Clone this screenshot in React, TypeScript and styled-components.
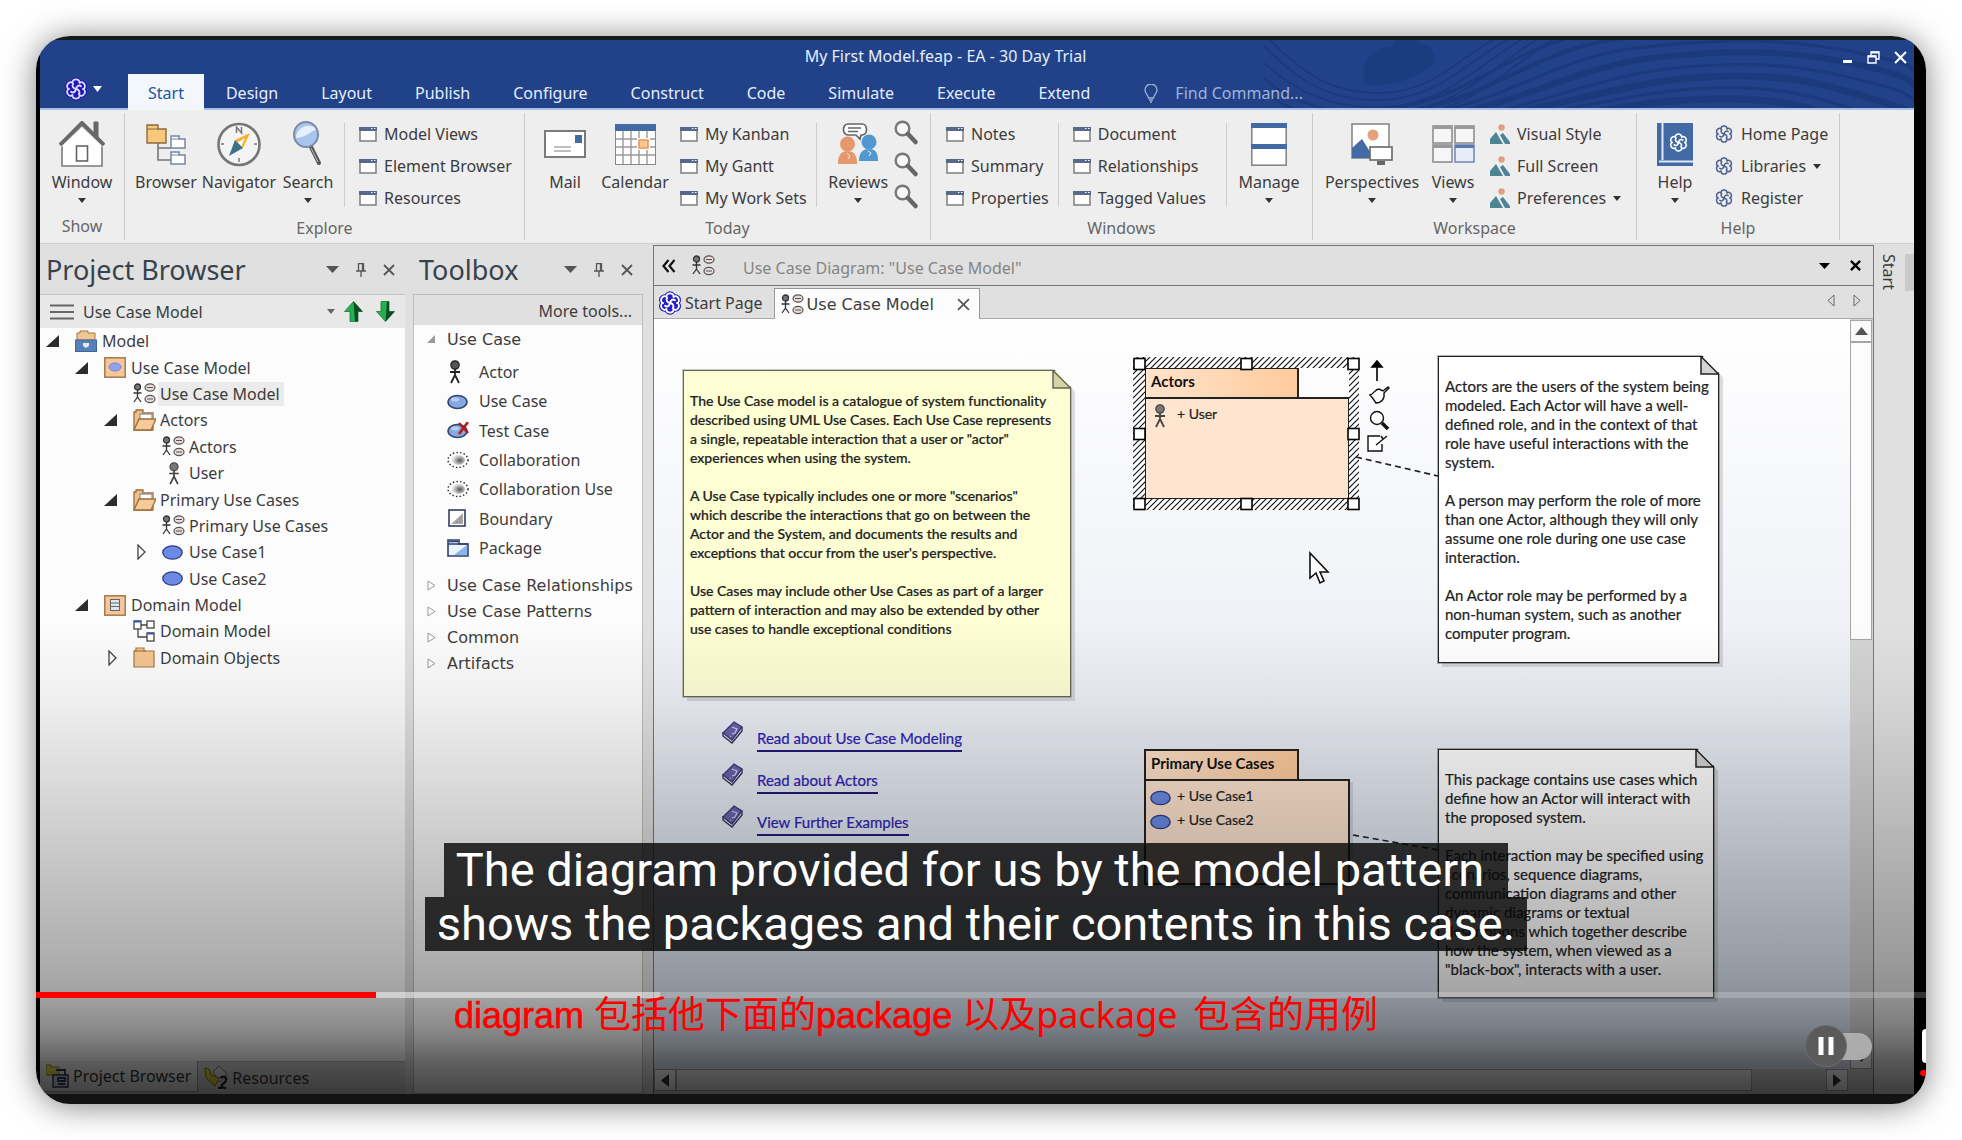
import React from "react";
import styled, { createGlobalStyle, css } from "styled-components";

const UI = '"Noto Sans", "Open Sans", sans-serif';
const WIDE = '"DejaVu Sans", "Noto Sans", sans-serif';
const NOTE = 'Lato, "Open Sans", sans-serif';
const CAPTION = 'Roboto, "Liberation Sans", sans-serif';
const CJK = '"Liberation Sans", "Noto Sans CJK SC", sans-serif';

const GlobalStyle = createGlobalStyle`
  *, *::before, *::after { box-sizing: border-box; }
  body { margin: 0; background: #fff; font-family: ${UI}; font-size: 16px; color: #3c3c3c; }
  button { border: 0; padding: 0; background: none; font: inherit; color: inherit; cursor: pointer; }
  ul { list-style: none; margin: 0; padding: 0; }
  svg { display: block; flex: none; }
  h2 { margin: 0; font-weight: 400; }
`;

/* ---------- frame ---------- */

const Page = styled.div`
  height: 100vh;
  min-height: 900px;
  padding: 36px;
  background: #fff;
`;

const Player = styled.main`
  position: relative;
  display: flex;
  height: 100%;
  padding: 4px 12px 10px 4px;
  border-radius: 34px;
  overflow: hidden;
  background: linear-gradient(#161b17 0 4px, #000 4px calc(100% - 10px), #131313 calc(100% - 10px));
`;

const PlayerShadow = styled.div`
  height: 100%;
  border-radius: 34px;
  box-shadow: 0 2px 32px rgba(0, 0, 0, 0.5);
`;

const AppWindow = styled.div`
  position: relative;
  display: flex;
  flex-direction: column;
  flex: 1;
  min-width: 0;
  background: #e0e0e0;
`;

const Shade = styled.div`
  position: absolute;
  left: 0;
  right: 0;
  bottom: 0;
  height: 474px;
  pointer-events: none;
  background: linear-gradient(
    rgba(0, 0, 0, 0) 0,
    rgba(0, 0, 0, 0.05) 80px,
    rgba(0, 0, 0, 0.1) 130px,
    rgba(0, 0, 0, 0.2) 230px,
    rgba(0, 0, 0, 0.31) 340px,
    rgba(0, 0, 0, 0.37) 380px,
    rgba(0, 0, 0, 0.44) 405px,
    rgba(0, 0, 0, 0.53) 425px,
    rgba(0, 0, 0, 0.61) 440px,
    rgba(0, 0, 0, 0.73) 474px
  );
`;

/* ---------- title bar ---------- */

const TitleBar = styled.header`
  position: relative;
  flex: none;
  background: #214289;
  border-bottom: 2px solid #a9c1ea;
  color: #e4edfb;
`;

const Waves = styled.svg`
  position: absolute;
  right: 0;
  top: 0;
  overflow: hidden;
`;

const TitleRow = styled.div`
  position: relative;
  display: flex;
  height: 34px;
  padding-left: 8px;
`;

const Title = styled.div`
  flex: 1;
  text-align: center;
  line-height: 32px;
`;

const WindowButtons = styled.div`
  display: flex;
  align-items: center;
  gap: 14px;
  padding-right: 7px;
`;

const MenuRow = styled.nav`
  position: relative;
  display: flex;
  gap: 1px;
  height: 34px;
`;

const AppButton = styled.button`
  display: flex;
  align-items: center;
  gap: 5px;
  width: 87px;
  padding: 0 0 4px 24px;
`;

const MenuTab = styled.button<{ $active?: boolean }>`
  padding: 0 21px;
  line-height: 38px;
  height: 36px;
  ${(p) =>
    p.$active &&
    css`
      padding: 0 20px;
      background: #f3f6fa;
      color: #1c55a5;
    `}
`;

const FindBox = styled.label`
  display: flex;
  align-items: center;
  gap: 17px;
  margin-left: 32px;
  padding-top: 4px;
  color: #9fb3d8;
`;

const FindInput = styled.input`
  width: 160px;
  height: 30px;
  padding: 0;
  border: 0;
  outline: 0;
  background: none;
  font: inherit;
  color: inherit;
  &::placeholder { color: #9fb3d8; opacity: 1; }
`;

/* ---------- ribbon ---------- */

const Ribbon = styled.div`
  display: flex;
  flex: none;
  height: 134px;
  background: #eee;
  border-bottom: 1px solid #cfcfcf;
`;

const Group = styled.section<{ $min: number }>`
  display: flex;
  flex-direction: column;
  min-width: ${(p) => p.$min}px;
  margin: 3px 0;
  border-right: 1px solid #cacaca;
`;

const GroupBody = styled.div`
  display: flex;
  height: 101px;
  padding: 5px 7px 0;
`;

const GroupLabel = styled.div`
  text-align: center;
  line-height: 28px;
  color: #666;
`;

const Divider = styled.div<{ $push?: boolean }>`
  width: 1px;
  height: 84px;
  margin: 5px 6px 0 ${(p) => (p.$push ? "auto" : "6px")};
  background: #cdcdcd;
`;

const Big = styled.button<{ $w: number }>`
  display: flex;
  flex-direction: column;
  align-items: center;
  width: ${(p) => p.$w}px;
  white-space: nowrap;
`;

const BigIcon = styled.span`
  display: flex;
  align-items: center;
  justify-content: center;
  height: 52px;
`;

const BigLabel = styled.span`
  line-height: 24px;
  margin-bottom: 4px;
`;

const SmallColumn = styled.div`
  padding: 0 3px 0 8px;
`;

const Small = styled.button`
  display: flex;
  align-items: center;
  gap: 7px;
  height: 32px;
  white-space: nowrap;
`;

/* ---------- docked panels ---------- */

const Workspace = styled.div`
  display: flex;
  flex: 1;
  min-height: 0;
  padding-top: 1px;
`;

const Panel = styled.section<{ $w: number; $gap: number }>`
  display: flex;
  flex-direction: column;
  flex: none;
  width: ${(p) => p.$w}px;
  margin-right: ${(p) => p.$gap}px;
`;

const PanelHeader = styled.div`
  display: flex;
  align-items: center;
  gap: 17px;
  height: 49px;
  padding: 0 10px 0 6px;
  color: #5a5a5a;
`;

const PanelTitle = styled.h2`
  flex: 1;
  font-size: 27px;
  line-height: 32px;
  color: #38424c;
`;

const PickRow = styled.div`
  display: flex;
  align-items: center;
  height: 34px;
  padding: 0 10px;
  gap: 9px;
  background: #e8e8e8;
  border-top: 1px solid #c4c4c4;
`;

const PickSelect = styled.select`
  flex: 1;
  appearance: none;
  border: 0;
  padding: 0;
  background: none;
  font: inherit;
  color: inherit;
`;

const PickArrows = styled.div`
  display: flex;
  gap: 13px;
`;

const TreeArea = styled.div`
  flex: 1;
  min-height: 0;
  background: #fcfcfc;
`;

const Tree = styled.ul`
  display: flex;
  flex-direction: column;
  height: 343px;
`;

const TreeRow = styled.li<{ $level: number }>`
  display: flex;
  flex: 1;
  align-items: center;
  padding-left: ${(p) => 6 + p.$level * 29}px;
  white-space: nowrap;
`;

const Twisty = styled.span`
  display: flex;
  width: 29px;
`;

const TreeIcon = styled.span`
  display: flex;
  width: 25px;
`;

const TreeText = styled.span<{ $selected?: boolean }>`
  line-height: 24px;
  padding: 0 4px 0 2px;
  background: ${(p) => (p.$selected ? "#ebebeb" : "transparent")};
`;

const DockTabs = styled.div`
  display: flex;
  height: 33px;
  background: #d2d2d2;
  border-top: 1px solid #b5b5b5;
`;

const DockTab = styled.button<{ $active?: boolean }>`
  display: flex;
  align-items: center;
  gap: 4px;
  height: 31px;
  padding: 0 6px;
  color: #333;
  ${(p) =>
    p.$active &&
    css`
      margin-top: -1px;
      background: #eee;
      border-right: 1px solid #999;
      border-bottom: 1px solid #999;
    `}
`;

const ToolboxBody = styled.div`
  display: flex;
  flex-direction: column;
  flex: 1;
  min-height: 0;
  overflow: hidden;
  background: #fcfcfc;
  border: 1px solid #bdbdbd;
`;

const MoreTools = styled.button`
  flex: none;
  height: 30px;
  padding: 2px 10px 0 0;
  text-align: right;
  background: #e0e0e0;
`;

const ToolHeading = styled.button`
  display: flex;
  align-items: center;
  flex: none;
  gap: 11px;
  height: 26px;
  padding: 2px 0 0 13px;
  font-family: ${WIDE};
  font-size: 16px;
  white-space: nowrap;
`;

const ToolList = styled.ul`
  display: flex;
  flex-direction: column;
  height: 206px;
  margin: 5px 0 9px;
`;

const ToolRow = styled.li`
  display: flex;
  flex: 1;
  align-items: center;
  gap: 10px;
  padding: 2px 0 0 33px;
`;

/* ---------- document area ---------- */

const Documents = styled.section`
  display: flex;
  flex-direction: column;
  flex: 1;
  min-width: 0;
  border: 1px solid #777;
  border-bottom: 0;
`;

const DocHeader = styled.div`
  display: flex;
  align-items: center;
  height: 40px;
  padding: 0 12px 0 8px;
  border-bottom: 1px solid #777;
  color: #111;
`;

const DocTitle = styled.div`
  flex: 1;
  padding: 4px 0 0 28px;
  color: #858585;
`;

const Spacer = styled.div<{ $w: number }>`
  width: ${(p) => p.$w}px;
`;

const TabStrip = styled.div`
  display: flex;
  height: 33px;
  border-bottom: 1px solid #aaa;
`;

const DocTab = styled.button<{ $active?: boolean }>`
  display: flex;
  align-items: center;
  gap: 3px;
  padding: 2px 11px 0 4px;
  ${(p) =>
    p.$active &&
    css`
      height: 32px;
      margin-top: 2px;
      padding: 0 9px 0 6px;
      background: #fdfdfd;
      border: 1px solid #999;
      border-bottom: 0;
      font-family: ${WIDE};
    `}
`;

const TabClose = styled.span`
  display: flex;
  margin-left: 20px;
`;

const StripArrows = styled.div`
  display: flex;
  align-items: center;
  gap: 18px;
  margin-left: auto;
  padding: 0 12px 3px 0;
`;

const CanvasRow = styled.div`
  display: flex;
  flex: 1;
  min-height: 0;
`;

const Canvas = styled.div`
  position: relative;
  flex: 1;
  min-width: 0;
  overflow: hidden;
  background: linear-gradient(#fff 0, #f0f2f7 300px, #dde4f0 640px, #dbe6f4 100%);
  color: #222;
  font-family: ${NOTE};
  font-size: 14px;
`;

const VScroll = styled.div`
  display: flex;
  flex-direction: column;
  width: 23px;
  padding: 1px 1px 0 0;
  background: #d4d4d4;
`;

const HScroll = styled.div`
  display: flex;
  height: 25px;
  padding-bottom: 2px;
  background: #d0d0d0;
`;

const ScrollButton = styled.button`
  display: flex;
  flex: none;
  align-items: center;
  justify-content: center;
  width: 22px;
  height: 22px;
  background: #fafafa;
  border: 1px solid #a5a5a5;
`;

const VThumb = styled.div`
  height: 298px;
  margin-bottom: auto;
  background: #fcfcfc;
  border: 1px solid #a5a5a5;
`;

const HThumb = styled.div`
  flex: 1;
  margin-right: 74px;
  height: 22px;
  background: #eee;
  border: 1px solid #a5a5a5;
`;

const SideStrip = styled.aside`
  display: flex;
  justify-content: space-between;
  width: 40px;
  padding: 9px 0 0 4px;
`;

const SideTab = styled.button`
  writing-mode: vertical-rl;
  align-self: flex-start;
  line-height: 22px;
`;

const SideBlock = styled.div`
  width: 9px;
  height: 37px;
  background: #cacaca;
`;

/* ---------- diagram elements ---------- */

interface Box { $x: number; $y: number; $w: number; $h: number }

const NoteBox = styled.article<Box & { $fill: string; $line: string; $compact?: boolean }>`
  position: absolute;
  left: ${(p) => p.$x}px;
  top: ${(p) => p.$y}px;
  width: ${(p) => p.$w}px;
  height: ${(p) => p.$h}px;
  padding: 20px 0 0 6px;
  white-space: pre;
  font-size: ${(p) => (p.$compact ? 14 : 15)}px;
  font-weight: ${(p) => (p.$compact ? 500 : 400)};
  line-height: 19px;
  -webkit-text-stroke: 0.2px currentColor;
  background: ${(p) => p.$fill};
  border: 1px solid ${(p) => p.$line};
  outline: 1px solid ${(p) => p.$line}55;
  box-shadow: 4px 4px 0 rgba(0, 0, 0, 0.12);
  clip-path: polygon(-2px -2px, calc(100% - 18px) -2px, calc(100% + 1px) 18px, calc(100% + 6px) 24px, calc(100% + 6px) calc(100% + 6px), -2px calc(100% + 6px));
`;

const Fold = styled.svg`
  position: absolute;
  right: -1px;
  top: -1px;
`;

const PackageBox = styled.article<Box>`
  position: absolute;
  left: ${(p) => p.$x}px;
  top: ${(p) => p.$y}px;
  width: ${(p) => p.$w}px;
  height: ${(p) => p.$h}px;
  display: flex;
  flex-direction: column;
`;

const PackageName = styled.div`
  width: 155px;
  height: 30px;
  padding-left: 5px;
  line-height: 24px;
  font-size: 15px;
  font-weight: 700;
  color: #111;
  background: linear-gradient(90deg, #ffe3cc, #ffcb9c);
  border: 2px solid #222;
  border-bottom: 0;
`;

const PackageBody = styled.ul`
  flex: 1;
  padding: 2px 0 0 4px;
  background: #ffe4cf;
  border: 2px solid #222;
  box-shadow: 3px 3px 0 rgba(0, 0, 0, 0.1);
`;

const PackageItem = styled.li`
  display: flex;
  align-items: center;
  height: 24px;
  -webkit-text-stroke: 0.2px currentColor;
`;

const ItemIcon = styled.span`
  display: flex;
  width: 27px;
  padding-top: 6px;
`;

const Overlay = styled.svg`
  position: absolute;
  left: 0;
  top: 0;
  pointer-events: none;
`;

const Links = styled.ul`
  position: absolute;
  left: 68px;
  top: 402px;
  font-size: 15px;
  -webkit-text-stroke: 0.2px currentColor;
`;

const LinkItem = styled.li`
  display: flex;
  gap: 14px;
  height: 42px;
`;

const DocLink = styled.a`
  align-self: flex-start;
  margin-top: 5px;
  line-height: 24px;
  color: #2d22b4;
  text-decoration: none;
  border-bottom: 2px solid #25187c;
`;

/* ---------- player overlays ---------- */

const CaptionBlock = styled.div`
  position: absolute;
  left: 0;
  right: 10px;
  bottom: 153px;
  display: flex;
  flex-direction: column;
  align-items: center;
`;

const CaptionLine = styled.span<{ $tail?: number }>`
  padding: 0 ${(p) => p.$tail ?? 12}px 0 12px;
  font-family: ${CAPTION};
  font-size: 47px;
  line-height: 54px;
  white-space: nowrap;
  color: #fff;
  background: rgba(8, 8, 8, 0.82);
`;

const Seek = styled.input`
  position: absolute;
  left: 0;
  bottom: 106px;
  width: 100%;
  height: 6px;
  margin: 0;
  appearance: none;
  background: linear-gradient(
    90deg,
    #ff0000 0 18%,
    rgba(255, 255, 255, 0.5) 18% 33%,
    rgba(255, 255, 255, 0.2) 33%
  );
  &::-webkit-slider-thumb { appearance: none; width: 0; height: 6px; }
`;

const Remark = styled.p`
  position: absolute;
  left: 418px;
  bottom: 66px;
  display: flex;
  align-items: baseline;
  margin: 0;
  font-family: ${CJK};
  font-size: 37px;
  line-height: 44px;
  white-space: pre;
  color: #ff0000;
`;

const Latin = styled.span<{ $strong?: boolean }>`
  font-family: ${(p) => (p.$strong ? '"Liberation Sans"' : '"Noto Sans"')}, sans-serif;
  font-size: 36px;
  margin-right: ${(p) => (p.$strong ? 0 : 6)}px;
  -webkit-text-stroke: ${(p) => (p.$strong ? "0.6px" : "0")} #ff0000;
`;

const Autoplay = styled.div`
  position: absolute;
  right: 54px;
  bottom: 38px;
  display: flex;
  align-items: center;
`;

const PauseKnob = styled.button`
  display: flex;
  align-items: center;
  justify-content: center;
  width: 40px;
  height: 40px;
  border-radius: 50%;
  background: #5a5a5a;
  box-shadow: 0 0 0 1px #6c6c6c;
  z-index: 1;
`;

const AutoplaySwitch = styled.input`
  appearance: none;
  width: 36px;
  height: 27px;
  margin: 0 0 0 -10px;
  border-radius: 0 14px 14px 0;
  background: rgba(176, 176, 176, 0.95);
`;

const EdgeButton = styled.button`
  position: absolute;
  right: 0;
  bottom: 41px;
  width: 4px;
  height: 34px;
  border-radius: 4px 0 0 4px;
  background: #fff;
`;

const EdgeDot = styled.span`
  position: absolute;
  right: 0;
  bottom: 28px;
  width: 6px;
  height: 6px;
  border-radius: 3px 0 0 3px;
  background: #f00;
`;

/* ---------- icons ---------- */

const Caret = ({ w = 8, h = 5, fill = "#333" }) => (
  <svg width={w} height={h} viewBox="0 0 8 5" preserveAspectRatio="none"><path d="M0 0h8L4 5z" fill={fill} /></svg>
);

const LOBES = [0, 60, 120, 180, 240, 300];

const Knot = ({ size = 22, line = "#4a5f8f", halo = "none" }) => (
  <svg width={size} height={size} viewBox="0 0 24 24" fill="none">
    {halo !== "none" && LOBES.map((a) => <circle key={a} cx="12" cy="6" r="5.800" fill={halo} transform={`rotate(${a} 12 12)`} />)}
    {halo !== "none" && <circle cx="12" cy="12" r="7" fill={halo} />}
    <g stroke={line} strokeWidth="1.800" strokeLinecap="round">
      {LOBES.map((a) => (
        <path key={a} d="M8.400 5.800C8 1.200 16 1.200 15.600 5.800" transform={`rotate(${a} 12 12)`} />
      ))}
      {[0, 90, 180, 270].map((a) => (
        <path key={a} d="M12 12C12.600 9 15 7.600 17 9.200" transform={`rotate(${a} 12 12)`} />
      ))}
    </g>
  </svg>
);

const Pane = () => (
  <svg width="18" height="15" viewBox="0 0 18 15">
    <rect x="1" y="1" width="16" height="13" fill="#fff" stroke="#7d7d7d" strokeWidth="1.500" />
    <rect x="0" y="0" width="18" height="4" fill="#56698c" />
    <path d="M12 1.500h1.500M15 1.500h1.500" stroke="#fff" />
  </svg>
);

const House = () => (
  <svg width="46" height="46" viewBox="0 0 46 46">
    <path d="M39 18V1h-4v12" fill="#666" stroke="#666" />
    <path d="M3 24 23 4l20 20v21H3z" fill="#fff" stroke="#7a7a7a" strokeWidth="1.600" />
    <path d="M1 24 23 2l22 22" fill="none" stroke="#6a6a6a" strokeWidth="4" />
    <path d="M2 26 23 6l21 20" fill="none" stroke="#ddd" strokeWidth="1" />
    <rect x="17.500" y="25" width="11" height="15" fill="#fff" stroke="#666" strokeWidth="1.600" />
  </svg>
);

const BrowserIcon = () => (
  <svg width="40" height="41" viewBox="0 0 40 41">
    <path d="M12 18v6h13M12 24v12h13" fill="none" stroke="#777" strokeWidth="1.600" />
    <path d="M1 1h11v4h8v14H1z" fill="#f7c77c" stroke="#8a6a3c" strokeWidth="1.400" />
    <path d="M1 5h11" stroke="#8a6a3c" />
    <path d="M25 12h8v3h6v9H25zM25 28h8v3h6v9H25z" fill="#fff" stroke="#7486a6" strokeWidth="1.500" />
    <path d="M25 15h8M25 31h8" stroke="#7486a6" />
  </svg>
);

const Compass = () => (
  <svg width="44" height="45" viewBox="0 0 44 45">
    <circle cx="22" cy="22.500" r="20.500" fill="#f4f4f4" stroke="#757575" strokeWidth="2.600" />
    <path d="M19.500 11V5l5 6V5M22 36v4M4 22h3M37 22h3" fill="none" stroke="#777" strokeWidth="1.500" />
    <path d="m33 11-15 7 8 8z" fill="#f5b12c" />
    <path d="m28 16-8 5 4 4z" fill="#fff" />
    <path d="m12 34 6-16 8 8z" fill="#3d7186" />
  </svg>
);

const Lens = () => (
  <svg width="30" height="46" viewBox="0 0 30 46">
    <path d="m18 26 8 16" stroke="#555" strokeWidth="4" strokeLinecap="round" />
    <path d="m18 27 7 14" stroke="#c5c5c5" strokeWidth="1" />
    <ellipse cx="13" cy="13.500" rx="12" ry="12.500" fill="#a9c5ee" stroke="#7c8aa5" strokeWidth="2" />
    <path d="M3 17C3 5 20 1 23 9c-6 1-8 7-20 8z" fill="#e6f0fd" />
  </svg>
);

const MailIcon = () => (
  <svg width="42" height="28" viewBox="0 0 42 28">
    <rect x="1" y="1" width="40" height="26" fill="#fff" stroke="#7a7a7a" strokeWidth="2" />
    <rect x="31" y="5" width="7" height="8" fill="#426ba5" />
    <path d="M10 17h17M10 21h17" stroke="#aaa" strokeWidth="1.600" />
  </svg>
);

const CalendarIcon = () => (
  <svg width="41" height="41" viewBox="0 0 41 41">
    <rect x=".5" y=".5" width="40" height="40" fill="#fff" stroke="#888" />
    <path d="M8 7v33M16 7v33M24 7v33M32 7v33M1 15h39M1 23h39M1 31h39" stroke="#999" strokeWidth="1.400" />
    <rect width="41" height="7" fill="#426ba5" />
    <rect x="22" y="14" width="13" height="12" fill="#fff" />
    <rect x="24" y="16" width="9" height="8" fill="#ffc68c" stroke="#e8935a" strokeWidth="1.500" />
  </svg>
);

const ReviewsIcon = () => (
  <svg width="40" height="42" viewBox="0 0 40 42">
    <circle cx="31" cy="19" r="7.500" fill="#5098cf" />
    <path d="M21 38c0-9 4-12 10-12s9 3 9 12z" fill="#5098cf" />
    <circle cx="9.500" cy="21" r="7.500" fill="#e6976b" />
    <path d="M0 41c0-9 3-13 9.500-13S19 32 19 41z" fill="#e6976b" />
    <path d="M10 1h14c6 0 6 11 0 11h-1l-1 4-4-4h-8C4 12 4 1 10 1z" fill="#fff" stroke="#666" strokeWidth="1.700" />
    <path d="M10 5h13M10 8.500h10" stroke="#666" strokeWidth="1.400" />
    <path d="m9 30 3 3-2 3M30 28l3 2-2 3" stroke="#eee" fill="none" />
  </svg>
);

const SmallLens = () => (
  <svg width="24" height="28" viewBox="0 0 24 28">
    <circle cx="8.500" cy="8.500" r="6.800" fill="#f8f8f8" stroke="#777" strokeWidth="2.400" />
    <path d="m14 14 7.500 8" stroke="#666" strokeWidth="4.500" strokeLinecap="round" />
  </svg>
);

const ManageIcon = () => (
  <svg width="36" height="43" viewBox="0 0 36 43">
    <rect x=".8" y=".8" width="34.400" height="41.400" fill="#fff" stroke="#888" strokeWidth="1.600" />
    <path d="M0 0h36v5H0zM0 21h36v5H0z" fill="#426ba5" />
  </svg>
);

const PerspectivesIcon = () => (
  <svg width="42" height="43" viewBox="0 0 42 43">
    <rect x="1" y="1" width="37" height="34" fill="#fff" stroke="#888" strokeWidth="1.600" />
    <circle cx="22" cy="12" r="5.500" fill="#e6a07a" />
    <path d="M1 35V25l10-9 12 19z" fill="#426ba5" />
    <rect x="19" y="24" width="22" height="13" fill="#fff" stroke="#666" strokeWidth="1.600" />
    <path d="M26 38h8v4h-8z" fill="#666" />
  </svg>
);

const ViewsIcon = () => (
  <svg width="43" height="38" viewBox="0 0 43 38">
    {[[1, 1], [23, 1], [1, 20], [23, 20]].map(([x, y], i) => (
      <g key={i}>
        <rect x={x} y={y} width="19" height="17" fill={i === 3 ? "#e6ecf8" : "#f6f6f6"} stroke={i === 3 ? "#6e86b5" : "#888"} strokeWidth="1.500" />
        <rect x={x} y={y} width="19" height="3" fill={i === 3 ? "#5878b0" : "#999"} />
      </g>
    ))}
  </svg>
);

const Scene = () => (
  <svg width="20" height="20" viewBox="0 0 20 20">
    <circle cx="11.500" cy="3.500" r="3.200" fill="#e0a07c" />
    <path d="M0 20V15l6-7 7 12zM10 11l3-2 7 9v2h-5z" fill="#4c8496" />
  </svg>
);

const HelpBook = () => (
  <svg width="36" height="43" viewBox="0 0 36 43">
    <rect width="36" height="43" fill="#426ba5" />
    <path d="M5.500 0v37M2 38.500h34" stroke="#dfe8f4" strokeWidth="2" />
    <svg x="11" y="9" width="22" height="22" viewBox="0 0 22 22"><Knot size={21} line="#fff" /></svg>
  </svg>
);

const Pin = () => (
  <svg width="10" height="14" viewBox="0 0 10 14" fill="none" stroke="#555" strokeWidth="1.300">
    <path d="M2.500 8V.7h5V8M0 8h10M5 8v6M6.500 1v7" />
  </svg>
);

const Cross = ({ size = 12, color = "#555", weight = 1.8 }) => (
  <svg width={size} height={size} viewBox="0 0 12 12"><path d="m1 1 10 10M11 1 1 11" stroke={color} strokeWidth={weight} /></svg>
);

const Burger = () => (
  <svg width="24" height="16" viewBox="0 0 24 16"><path d="M0 1.500h24M0 8h24M0 14.500h24" stroke="#666" strokeWidth="2.200" /></svg>
);

const GreenArrow = ({ down = false }) => (
  <svg width="19" height="21" viewBox="0 0 19 21">
    <g transform={down ? "rotate(180 9.5 10.5)" : undefined}>
      <path d="m9.500.5 9 10H14v10H6v-10H.5z" fill="#22b050" stroke="#1d7a3a" strokeWidth=".8" />
      <path d={down ? "M.5 10.500 9.500.5 8 20.500H6v-10z" : "m9.500.5 9 10H14v10h-3z"} fill="#0e4a22" />
    </g>
  </svg>
);

const Filled = () => <svg width="13" height="12" viewBox="0 0 13 12"><path d="M13 0v12H0z" fill="#2c2c2c" /></svg>;
const Hollow = () => (
  <svg width="13" height="16" viewBox="-4 -1 13 16"><path d="M1 0v14l7-7z" fill="#fff" stroke="#444" strokeWidth="1.300" /></svg>
);

const ModelIcon = () => (
  <svg width="22" height="22" viewBox="0 0 22 22">
    <path d="M2 10V3h3V1h8v2h7v7z" fill="#f1c493" stroke="#a6763f" />
    <rect x=".5" y="10" width="21" height="11.500" fill="#5580b8" stroke="#40679c" />
    <path d="M8 13h6v3l-3 2-3-2z" fill="#dfe9f5" />
  </svg>
);

const ViewIcon = ({ kind = "use" }) => (
  <svg width="22" height="21" viewBox="0 0 22 21">
    <rect x=".8" y=".8" width="20.400" height="19.400" fill="#f5c69c" stroke="#a57a49" strokeWidth="1.500" />
    {kind === "use" ? (
      <ellipse cx="11" cy="10" rx="6" ry="4" fill="#8fa3ef" stroke="#7481c9" />
    ) : (
      <g><rect x="6.500" y="4.500" width="9" height="11" fill="#dde6ef" stroke="#666" /><path d="M6.500 8h9M6.500 11.500h9" stroke="#666" /></g>
    )}
  </svg>
);

const DiagramIcon = () => (
  <svg width="23" height="21" viewBox="0 0 23 21" fill="none" stroke="#333" strokeWidth="1.300">
    <circle cx="4.500" cy="4" r="3" fill="#777" />
    <path d="M4.500 7v7M.5 10h8M4.500 14 1 19M4.500 14 8 19" />
    <g fill="#e9dcd8" stroke="#555" strokeWidth="1.200">
      <ellipse cx="17" cy="4.500" rx="5" ry="3.600" /><ellipse cx="17" cy="16" rx="5" ry="3.600" />
      <path d="M14 4.500h6M14 16h6" />
    </g>
  </svg>
);

const ActorIcon = ({ ball = "#777", line = "#444", w = 12, h = 24 }) => (
  <svg width={w} height={h} viewBox="0 0 12 24" fill="none" stroke={line} strokeWidth="1.800">
    <circle cx="6" cy="5" r="4.200" fill={ball} strokeWidth="1.200" />
    <path d="M6 9v7M1 12h10M6 15l-4 8M6 15l4 8" />
  </svg>
);

const FolderOpen = () => (
  <svg width="23" height="22" viewBox="0 0 23 22" stroke="#9c6d38" strokeWidth="1.300">
    <path d="M1 21V3h2V1h7v3h10v17z" fill="#f0c08c" />
    <path d="M7 5h12v6H7z" fill="#fff" stroke="#999" />
    <path d="m1 21 5-11h17l-5 11z" fill="#f6cb9c" />
  </svg>
);

const FolderClosed = () => (
  <svg width="22" height="21" viewBox="0 0 22 21" stroke="#a6763f" strokeWidth="1.200">
    <path d="M1 20V4h2V1h8v3h10v16z" fill="#f3c592" /><path d="M1 4h12" />
  </svg>
);

const Oval = ({ w = 21, h = 15 }) => (
  <svg width={w} height={h} viewBox="0 0 21 15"><ellipse cx="10.500" cy="7.500" rx="9.700" ry="6.700" fill="#6b8ae6" stroke="#2e3c80" strokeWidth="1.300" /></svg>
);

const DomainIcon = () => (
  <svg width="22" height="22" viewBox="0 0 22 22" fill="#fff" stroke="#444" strokeWidth="1.300">
    <path d="M8 5h6M5 9v8h9" fill="none" />
    <rect x="1" y="1" width="7" height="8" /><rect x="14" y="1" width="7" height="7" /><rect x="14" y="13" width="7" height="8" />
    <path d="M1 1.500h7M14 13.500h7" stroke="#3458b8" strokeWidth="2" />
  </svg>
);

const ToolOval = ({ cross = false }) => (
  <svg width="22" height="17" viewBox="0 0 22 17">
    <ellipse cx="10.500" cy="9" rx="9.500" ry="6.500" fill="#86a8e0" stroke="#34466f" strokeWidth="1.700" />
    <ellipse cx="8" cy="6.500" rx="4" ry="2" fill="#b7cdf2" />
    {cross && <path d="m12 1 9 10M21 0l-9 12" stroke="#b41c1c" strokeWidth="2.600" />}
  </svg>
);

const Dotted = () => (
  <svg width="22" height="18" viewBox="0 0 22 18">
    <defs>
      <radialGradient id="dust" cx=".6" cy=".55" r=".5"><stop offset="0" stopColor="#555" /><stop offset="1" stopColor="#ddd" /></radialGradient>
    </defs>
    <ellipse cx="11" cy="9" rx="10" ry="7.500" fill="none" stroke="#222" strokeWidth="1.400" strokeDasharray="1.400 2.200" />
    <ellipse cx="11.500" cy="9" rx="6.500" ry="5" fill="url(#dust)" />
  </svg>
);

const BoundaryIcon = () => (
  <svg width="22" height="19" viewBox="0 0 22 19">
    <rect x="2" y="1" width="16" height="16" fill="#fff" stroke="#333d63" strokeWidth="1.600" />
    <path d="M4 15 16 4v11z" fill="#aaa" /><path d="M9 14 15 8M12 14l3-3" stroke="#666" strokeDasharray="1 1" />
  </svg>
);

const PackageIcon = () => (
  <svg width="22" height="18" viewBox="0 0 22 18">
    <path d="M1 1h11v4h9v12H1z" fill="#eef4ff" stroke="#2c3f6c" strokeWidth="1.600" />
    <path d="M20 6v10H7z" fill="#8db3ea" /><path d="M1 5h20M2 2.500h9" stroke="#2c3f6c" strokeWidth="1.600" />
  </svg>
);

const BookIcon = () => (
  <svg width="21" height="24" viewBox="0 0 21 24">
    <path d="M1 11v4l9 7 10-12V6" fill="#eee" stroke="#33305c" strokeWidth="1.400" />
    <path d="M1 12 12 1l8 5-10 13z" fill="#6a62ac" stroke="#3e3878" strokeWidth="1.300" />
    <path d="m10 6 5 2-2 4-3 1M8 15l1 .5" fill="none" stroke="#d5d2f0" strokeWidth="1.300" />
  </svg>
);

const DockProjectIcon = () => (
  <svg width="23" height="24" viewBox="0 0 23 24">
    <path d="M0 1h5v2h8v8H0z" fill="#e5dc4c" stroke="#8a8420" />
    <path d="M7 11h15v12H7z" fill="#ccd3e8" stroke="#333a5c" strokeWidth="1.500" />
    <path d="M10 6h9v6M12 14h7v3h-7zM12 20h7" fill="none" stroke="#333a5c" strokeWidth="1.800" />
  </svg>
);

const DockResourceIcon = () => (
  <svg width="24" height="25" viewBox="0 0 24 25">
    <path d="m9 7 6-6 8 8-7 8z" fill="#ddd" stroke="#777" />
    <path d="m1 3 4 1 2 6 8 3-4 8-9-8z" fill="#e0cf30" stroke="#7d7418" />
    <path d="M16 13c6-4 8 2 4 5s-3 5 2 5M14 23h4" fill="none" stroke="#222" strokeWidth="2.200" />
  </svg>
);

const Chevrons = () => (
  <svg width="14" height="14" viewBox="0 0 14 14"><path d="M6.500 1 1.500 7l5 6M12.500 1l-5 6 5 6" fill="none" stroke="#111" strokeWidth="2.200" /></svg>
);

const BulbIcon = () => (
  <svg width="14" height="19" viewBox="0 0 14 19" fill="none" stroke="#9fb3d8" strokeWidth="1.300">
    <path d="M4.500 14c0-3-3.500-4-3.500-8a6 6 0 0 1 12 0c0 4-3.500 5-3.500 8zM5 16h4M6 18h2" />
  </svg>
);

const RestoreIcon = () => (
  <svg width="13" height="13" viewBox="0 0 13 13" fill="none" stroke="#fff" strokeWidth="1.400">
    <path d="M4 4V1h8v7H9" /><path d="M1 5h8v7H1z" /><path d="M4 1.500h8M1 5.500h8" strokeWidth="2" />
  </svg>
);

const THIN_WAVES = [
  "M-6 0C28 34 58 62 118 60S206 18 250-4",
  "M6 0C38 32 66 54 118 53S196 16 236-4",
  "M-8 16C24 46 60 70 122 67S216 22 264-4",
  "M-10 30C20 58 60 78 128 73S226 28 278-4",
  "M-12 44C16 68 64 88 136 79S238 32 294-4",
];

const BROAD_WAVES: [string, number][] = [
  ["M110 70C196 66 236 14 312-4", 3],
  ["M130 72C216 66 262 14 346 0S440-6 470-4", 4],
  ["M152 74C238 66 286 18 372 8S520-2 590 12 640 26 660 36", 3],
  ["M172 76C256 66 310 26 396 17S540 12 600 26 640 42 660 52", 6],
  ["M196 78C280 66 336 34 420 27S550 28 604 42 640 56 660 66", 3],
  ["M220 78C300 66 360 42 440 37S560 44 606 58 640 70 660 80", 7],
  ["M250 78C330 66 380 50 450 48S560 58 620 80", 3],
  ["M300 78C370 64 410 58 470 59S550 70 590 84", 7],
];

const TitleWaves = () => (
  <Waves width="650" height="68" viewBox="0 0 650 68" fill="none" stroke="#1b3a7c">
    <path d="M101 44c-6-22 8-38 28-38 2-10 22-10 28-2 14 0 16 16 10 22-20 14-40 22-66 18z" fill="#1c3c80" stroke="none" />
    {THIN_WAVES.map((d) => <path key={d} d={d} strokeWidth="1.800" />)}
    {BROAD_WAVES.map(([d, w]) => <path key={d} d={d} strokeWidth={w} />)}
  </Waves>
);

/* ---------- content ---------- */

const MENU = ["Start", "Design", "Layout", "Publish", "Configure", "Construct", "Code", "Simulate", "Execute", "Extend"];

type Node = { level: number; text: string; icon: React.ReactNode; open?: boolean; selected?: boolean };

const TREE: Node[] = [
  { level: 0, text: "Model", icon: <ModelIcon />, open: true },
  { level: 1, text: "Use Case Model", icon: <ViewIcon />, open: true },
  { level: 2, text: "Use Case Model", icon: <DiagramIcon />, selected: true },
  { level: 2, text: "Actors", icon: <FolderOpen />, open: true },
  { level: 3, text: "Actors", icon: <DiagramIcon /> },
  { level: 3, text: "User", icon: <svg width="21" height="23" viewBox="-6 0 21 23"><ActorIcon h={23} /></svg> },
  { level: 2, text: "Primary Use Cases", icon: <FolderOpen />, open: true },
  { level: 3, text: "Primary Use Cases", icon: <DiagramIcon /> },
  { level: 3, text: "Use Case1", icon: <Oval />, open: false },
  { level: 3, text: "Use Case2", icon: <Oval /> },
  { level: 1, text: "Domain Model", icon: <ViewIcon kind="domain" />, open: true },
  { level: 2, text: "Domain Model", icon: <DomainIcon /> },
  { level: 2, text: "Domain Objects", icon: <FolderClosed />, open: false },
];

const TOOLS: [string, React.ReactNode][] = [
  ["Actor", <svg width="22" height="24" viewBox="-2 0 22 24"><ActorIcon w={12} h={24} line="#222" ball="#555" /></svg>],
  ["Use Case", <ToolOval />],
  ["Test Case", <ToolOval cross />],
  ["Collaboration", <Dotted />],
  ["Collaboration Use", <Dotted />],
  ["Boundary", <BoundaryIcon />],
  ["Package", <PackageIcon />],
];

const USE_CASE_NOTE = `The Use Case model is a catalogue of system functionality
described using UML Use Cases. Each Use Case represents
a single, repeatable interaction that a user or "actor"
experiences when using the system.

A Use Case typically includes one or more "scenarios"
which describe the interactions that go on between the
Actor and the System, and documents the results and
exceptions that occur from the user's perspective.

Use Cases may include other Use Cases as part of a larger
pattern of interaction and may also be extended by other
use cases to handle exceptional conditions`;

const ACTOR_NOTE = `Actors are the users of the system being
modeled. Each Actor will have a well-
defined role, and in the context of that
role have useful interactions with the
system.

A person may perform the role of more
than one Actor, although they will only
assume one role during one use case
interaction.

An Actor role may be performed by a
non-human system, such as another
computer program.`;

const PACKAGE_NOTE = `This package contains use cases which
define how an Actor will interact with
the proposed system.

Each interaction may be specified using
scenarios, sequence diagrams,
communication diagrams and other
dynamic diagrams or textual
descriptions which together describe
how the system, when viewed as a
"black-box", interacts with a user.`;

const BigButton = ({ label, icon, w, menu }: { label: string; icon: React.ReactNode; w: number; menu?: boolean }) => (
  <Big $w={w}>
    <BigIcon>{icon}</BigIcon>
    <BigLabel>{label}</BigLabel>
    {menu && <Caret />}
  </Big>
);

const SmallButtons = ({ items, icon, menu }: { items: string[]; icon: React.ReactNode; menu?: string }) => (
  <SmallColumn>
    {items.map((t) => (
      <Small key={t}>
        {icon}
        {t}
        {t === menu && <Caret />}
      </Small>
    ))}
  </SmallColumn>
);

const DiagramNote = ({ text, x, y, w, h, compact, fill = "#fff", fold = "#d4d4d4", line = "#222222" }: { text: string; x: number; y: number; w: number; h: number; compact?: boolean; fill?: string; fold?: string; line?: string }) => (
  <NoteBox $x={x} $y={y} $w={w} $h={h} $fill={fill} $line={line} $compact={compact}>
    {text}
    <Fold width="19" height="19" viewBox="0 0 19 19">
      <path d="M1 .5v17.500h17.500z" fill={fold} stroke={line} strokeWidth="1.500" />
    </Fold>
  </NoteBox>
);

const HANDLES = [485, 592, 699].flatMap((x) => [45, 115, 185].map((y) => [x, y])).filter(([x, y]) => !(x === 592 && y === 115));

const SelectionLayer = () => (
  <Overlay width="1200" height="750" viewBox="0 0 1200 750">
    <defs>
      <pattern id="hatch" width="6" height="6" patternUnits="userSpaceOnUse">
        <path d="M-1 7 7-1M-1 1l2-2M5 7l2-2" stroke="#111" strokeWidth="1.200" />
      </pattern>
    </defs>
    <path d="M479 38h226v153H479zM491 49v131h204V49z" fill="#fff" fillRule="evenodd" />
    <path d="M479 38h226v153H479zM491 49v131h204V49z" fill="url(#hatch)" fillRule="evenodd" />
    {HANDLES.map(([x, y]) => (
      <rect key={`${x}-${y}`} x={x - 5} y={y - 5.5} width="11" height="11" fill="#fff" stroke="#000" strokeWidth="1.600" />
    ))}
    <path d="M702 138 784 157M699 516 784 531" stroke="#222" strokeWidth="1.700" strokeDasharray="6 4" />
    <path d="M723 62V46M718 48l5-6 5 6z" fill="#000" stroke="#000" strokeWidth="1.600" />
    <g fill="#fff" stroke="#111" strokeWidth="1.400">
      <path d="M716 76c4-1 5-6 9-6l4 2 5-4 1 1-5 5c1 6-3 10-8 10-2-3-4-6-6-8z" />
      <circle cx="723" cy="99" r="6.500" />
      <path d="m728 104 6 6" strokeWidth="3.500" />
      <path d="M726 117h-12v15h14v-7M722 126l11-9M727 117l2 3" />
      <path d="M656 234v25l6-5 4 10 4-2-4-9h8z" strokeWidth="1.600" />
    </g>
  </Overlay>
);

export default function App() {
  return (
    <Page>
      <GlobalStyle />
      <PlayerShadow>
        <Player>
          <AppWindow>
            <TitleBar>
              <TitleWaves />
              <TitleRow>
                <Title>My First Model.feap - EA - 30 Day Trial</Title>
                <WindowButtons>
                  <button aria-label="Minimize"><svg width="10" height="13"><path d="M0 10.500h9" stroke="#fff" strokeWidth="3" /></svg></button>
                  <button aria-label="Restore"><RestoreIcon /></button>
                  <button aria-label="Close"><Cross size={13} color="#fff" weight={2} /></button>
                </WindowButtons>
              </TitleRow>
              <MenuRow>
                <AppButton aria-label="Application menu"><Knot size={24} line="#d9dcff" halo="#2216b8" /><Caret w={9} h={6} fill="#fff" /></AppButton>
                {MENU.map((m, i) => <MenuTab key={m} $active={i === 0}>{m}</MenuTab>)}
                <FindBox><BulbIcon /><FindInput aria-label="Find command" placeholder="Find Command..." /></FindBox>
              </MenuRow>
            </TitleBar>

            <Ribbon>
              <Group $min={85}>
                <GroupBody><BigButton label="Window" icon={<House />} w={70} menu /></GroupBody>
                <GroupLabel>Show</GroupLabel>
              </Group>
              <Group $min={400}>
                <GroupBody>
                  <BigButton label="Browser" icon={<BrowserIcon />} w={68} />
                  <BigButton label="Navigator" icon={<Compass />} w={78} />
                  <BigButton label="Search" icon={<Lens />} w={60} menu />
                  <Divider />
                  <SmallButtons icon={<Pane />} items={["Model Views", "Element Browser", "Resources"]} />
                </GroupBody>
                <GroupLabel>Explore</GroupLabel>
              </Group>
              <Group $min={406}>
                <GroupBody>
                  <BigButton label="Mail" icon={<MailIcon />} w={66} />
                  <BigButton label="Calendar" icon={<CalendarIcon />} w={74} />
                  <SmallButtons icon={<Pane />} items={["My Kanban", "My Gantt", "My Work Sets"]} />
                  <Divider />
                  <BigButton label="Reviews" icon={<ReviewsIcon />} w={71} menu />
                  <div>
                    {["Find review", "Find task", "Find event"].map((l) => <Small key={l} aria-label={l}><SmallLens /></Small>)}
                  </div>
                </GroupBody>
                <GroupLabel>Today</GroupLabel>
              </Group>
              <Group $min={382}>
                <GroupBody>
                  <SmallButtons icon={<Pane />} items={["Notes", "Summary", "Properties"]} />
                  <Divider />
                  <SmallButtons icon={<Pane />} items={["Document", "Relationships", "Tagged Values"]} />
                  <Divider $push />
                  <BigButton label="Manage" icon={<ManageIcon />} w={72} menu />
                </GroupBody>
                <GroupLabel>Windows</GroupLabel>
              </Group>
              <Group $min={324}>
                <GroupBody>
                  <BigButton label="Perspectives" icon={<PerspectivesIcon />} w={104} menu />
                  <BigButton label="Views" icon={<ViewsIcon />} w={58} menu />
                  <SmallButtons icon={<Scene />} items={["Visual Style", "Full Screen", "Preferences"]} menu="Preferences" />
                </GroupBody>
                <GroupLabel>Workspace</GroupLabel>
              </Group>
              <Group $min={203}>
                <GroupBody>
                  <BigButton label="Help" icon={<HelpBook />} w={62} menu />
                  <SmallButtons icon={<Knot size={20} />} items={["Home Page", "Libraries", "Register"]} menu="Libraries" />
                </GroupBody>
                <GroupLabel>Help</GroupLabel>
              </Group>
            </Ribbon>

            <Workspace>
              <Panel $w={365} $gap={8}>
                <PanelHeader>
                  <PanelTitle>Project Browser</PanelTitle>
                  <Caret w={13} h={7} fill="#555" /><Pin /><Cross />
                </PanelHeader>
                <PickRow>
                  <Burger />
                  <PickSelect aria-label="Current package"><option>Use Case Model</option></PickSelect>
                  <Caret fill="#666" />
                  <PickArrows>
                    <button aria-label="Move up"><GreenArrow /></button>
                    <button aria-label="Move down"><GreenArrow down /></button>
                  </PickArrows>
                </PickRow>
                <TreeArea>
                  <Tree>
                    {TREE.map((n, i) => (
                      <TreeRow key={i} $level={n.level}>
                        <Twisty>{n.open === true && <Filled />}{n.open === false && <Hollow />}</Twisty>
                        <TreeIcon>{n.icon}</TreeIcon>
                        <TreeText $selected={n.selected}>{n.text}</TreeText>
                      </TreeRow>
                    ))}
                  </Tree>
                </TreeArea>
                <DockTabs>
                  <DockTab $active><DockProjectIcon />Project Browser</DockTab>
                  <DockTab><DockResourceIcon />Resources</DockTab>
                </DockTabs>
              </Panel>

              <Panel $w={230} $gap={10}>
                <PanelHeader>
                  <PanelTitle>Toolbox</PanelTitle>
                  <Caret w={13} h={7} fill="#555" /><Pin /><Cross />
                </PanelHeader>
                <ToolboxBody>
                  <MoreTools>More tools...</MoreTools>
                  <ToolHeading><svg width="9" height="8"><path d="M8 0v8H0z" fill="#999" /></svg>Use Case</ToolHeading>
                  <ToolList>
                    {TOOLS.map(([t, icon]) => <ToolRow key={t}>{icon}{t}</ToolRow>)}
                  </ToolList>
                  {["Use Case Relationships", "Use Case Patterns", "Common", "Artifacts"].map((t) => (
                    <ToolHeading key={t}><svg width="9" height="11"><path d="M1 1v9l7-4.500z" fill="#fff" stroke="#999" /></svg>{t}</ToolHeading>
                  ))}
                </ToolboxBody>
              </Panel>

              <Documents>
                <DocHeader>
                  <Chevrons /><Spacer $w={16} /><DiagramIcon />
                  <DocTitle>Use Case Diagram: "Use Case Model"</DocTitle>
                  <Caret w={11} h={6} fill="#000" /><Spacer $w={20} /><Cross size={11} color="#000" weight={2.6} />
                </DocHeader>
                <TabStrip>
                  <DocTab><Knot size={24} line="#fff" halo="#2420c8" />Start Page</DocTab>
                  <DocTab $active><DiagramIcon />Use Case Model<TabClose><Cross size={13} weight={1.6} /></TabClose></DocTab>
                  <StripArrows>
                    <svg width="8" height="13"><path d="M7 1v11L1 6.500z" fill="none" stroke="#666" /></svg>
                    <svg width="8" height="13"><path d="M1 1v11l6-5.500z" fill="none" stroke="#666" /></svg>
                  </StripArrows>
                </TabStrip>
                <CanvasRow>
                  <Canvas>
                    <DiagramNote compact text={USE_CASE_NOTE} x={29} y={51} w={388} h={327} fill="#fdfed3" fold="#d3d5a6" line="#666655" />
                    <DiagramNote text={ACTOR_NOTE} x={784} y={37} w={281} h={307} />
                    <DiagramNote text={PACKAGE_NOTE} x={784} y={430} w={276} h={249} />
                    <PackageBox $x={490} $y={48} $w={206} $h={133}>
                      <PackageName>Actors</PackageName>
                      <PackageBody>
                        <PackageItem><ItemIcon><svg width="20" height="24" viewBox="-4 0 20 24"><ActorIcon /></svg></ItemIcon>+ User</PackageItem>
                      </PackageBody>
                    </PackageBox>
                    <PackageBox $x={490} $y={430} $w={206} $h={136}>
                      <PackageName>Primary Use Cases</PackageName>
                      <PackageBody>
                        <PackageItem><ItemIcon><Oval w={21} h={16} /></ItemIcon>+ Use Case1</PackageItem>
                        <PackageItem><ItemIcon><Oval w={21} h={16} /></ItemIcon>+ Use Case2</PackageItem>
                      </PackageBody>
                    </PackageBox>
                    <Links>
                      {["Read about Use Case Modeling", "Read about Actors", "View Further Examples"].map((t) => (
                        <LinkItem key={t}><BookIcon /><DocLink href="#">{t}</DocLink></LinkItem>
                      ))}
                    </Links>
                    <SelectionLayer />
                  </Canvas>
                  <VScroll>
                    <ScrollButton aria-label="Scroll up"><svg width="13" height="8"><path d="M0 8h13L6.500 0z" fill="#555" /></svg></ScrollButton>
                    <VThumb />
                    <ScrollButton aria-label="Scroll down"><Caret w={11} h={7} /></ScrollButton>
                  </VScroll>
                </CanvasRow>
                <HScroll>
                  <ScrollButton aria-label="Scroll left"><svg width="8" height="13"><path d="M8 0v13L0 6.500z" fill="#333" /></svg></ScrollButton>
                  <HThumb />
                  <ScrollButton aria-label="Scroll right"><svg width="8" height="13"><path d="M0 0v13l8-6.500z" fill="#333" /></svg></ScrollButton>
                  <Spacer $w={25} />
                </HScroll>
              </Documents>

              <SideStrip><SideTab>Start</SideTab><SideBlock /></SideStrip>
            </Workspace>
            <Shade />
          </AppWindow>

          <CaptionBlock>
            <CaptionLine $tail={24}>The diagram provided for us by the model pattern</CaptionLine>
            <CaptionLine>shows the packages and their contents in this case.</CaptionLine>
          </CaptionBlock>
          <Seek type="range" aria-label="Seek" min={0} max={1890} defaultValue={341} />
          <Remark>
            <Latin $strong>diagram </Latin>包括他下面的<Latin $strong>package </Latin>以及<Latin>package </Latin>包含的用例
          </Remark>
          <Autoplay>
            <PauseKnob aria-label="Pause"><svg width="16" height="18"><path d="M3 0v18M13 0v18" stroke="#fff" strokeWidth="5" /></svg></PauseKnob>
            <AutoplaySwitch type="checkbox" aria-label="Autoplay" defaultChecked />
          </Autoplay>
          <EdgeButton aria-label="Captions" />
          <EdgeDot />
        </Player>
      </PlayerShadow>
    </Page>
  );
}
